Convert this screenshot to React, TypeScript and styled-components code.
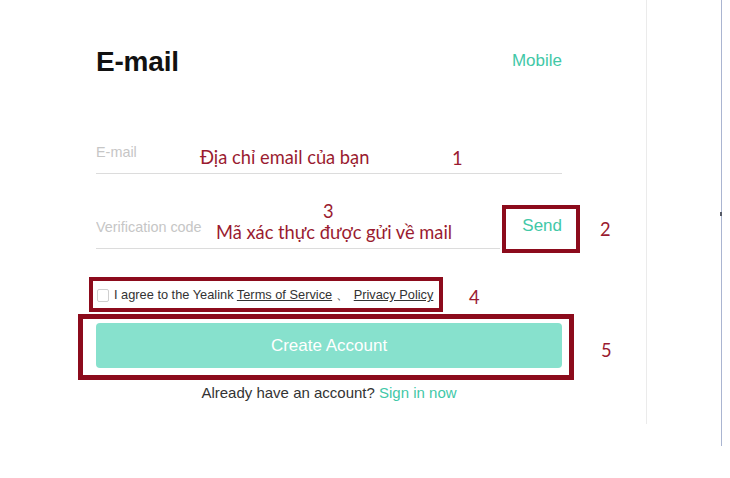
import { createGlobalStyle, styled } from "styled-components";

const GlobalStyle = createGlobalStyle`
    html, body {
        margin: 0;
        padding: 0;
        background: #ffffff;
    }
    body {
        font-family: "Liberation Sans", Arial, sans-serif;
        color: #333333;
    }
`

const TEAL = '#42c8a7';
const MAROON = '#8c0b1c';
const NOTE = '#9a1b30';

export default function App() {
    return (
        <>
            <GlobalStyle />
            <Window>
                <Panel>
                    <Form onSubmit={(e) => e.preventDefault()} autoComplete="off">
                        <Header>
                            <Title>E-mail</Title>
                            <SwitchLink href="#">Mobile</SwitchLink>
                        </Header>

                        <EmailField>
                            <LineInput type="email" placeholder="E-mail" />
                            <Note $top={16} $left={104}>Địa chỉ email của bạn</Note>
                            <Note $top={17} $left={356}>1</Note>
                        </EmailField>

                        <CodeRow>
                            <LineInput type="text" placeholder="Verification code" />
                            <SendButton type="button">
                                Send
                                <Mark $top={-1} $right={-18} $bottom={-4} $left={2} $width={4} />
                            </SendButton>
                            <Note $top={-5} $left={227}>3</Note>
                            <Note $top={16} $left={120}>Mã xác thực được gửi về mail</Note>
                            <Note $top={13} $left={504}>2</Note>
                        </CodeRow>

                        <AgreeRow>
                            <Agree>
                                <CheckBox type="checkbox" />
                                <span>
                                    I agree to the Yealink <TermLink href="#">Terms of Service</TermLink>{' 、'}<TermLink href="#">Privacy Policy</TermLink>
                                </span>
                                <Mark $top={-10} $right={-10} $bottom={-9} $left={-7} $width={4} />
                            </Agree>
                            <Note $top={0} $left={373}>4</Note>
                        </AgreeRow>

                        <SubmitWrap>
                            <CreateButton type="submit">Create Account</CreateButton>
                            <Mark $top={-9} $right={-12} $bottom={-12} $left={-18} $width={5} />
                            <Note $top={17} $left={505}>5</Note>
                        </SubmitWrap>

                        <SignIn>
                            Already have an account? <SignInLink href="#">Sign in now</SignInLink>
                        </SignIn>
                    </Form>
                </Panel>
            </Window>
        </>
    );
}

const Window = styled.div`
    position: relative;
    width: 721px;
    height: 446px;
    border-right: 1px solid #aab5d1;

    &::after {
        content: "";
        position: absolute;
        right: -1px;
        top: 212px;
        width: 2px;
        height: 4px;
        background: #555a66;
    }
`

const Panel = styled.div`
    width: 647px;
    height: 424px;
    border-right: 1px solid #ebebeb;
    padding: 46px 0 0 96px;
    box-sizing: border-box;
`

const Form = styled.form`
    width: 466px;
    display: flex;
    flex-direction: column;
`

const Header = styled.div`
    display: flex;
    justify-content: space-between;
    align-items: flex-start;
    height: 32px;
`

const Title = styled.h1`
    margin: 0;
    font-size: 28px;
    line-height: 32px;
    font-weight: 700;
    color: #111111;
    letter-spacing: -0.2px;
`

const SwitchLink = styled.a`
    margin-top: 5px;
    font-size: 17px;
    line-height: 20px;
    color: ${TEAL};
    text-decoration: none;
`

const EmailField = styled.div`
    position: relative;
    margin-top: 53px;
    display: flex;
`

const CodeRow = styled.div`
    position: relative;
    margin-top: 32px;
    display: flex;
    align-items: stretch;
`

const LineInput = styled.input`
    flex: 1;
    min-width: 0;
    height: 43px;
    box-sizing: border-box;
    padding: 0 0 1px;
    border: none;
    border-bottom: 1px solid #dcdcdc;
    outline: none;
    background: transparent;
    font-family: "Liberation Sans", Arial, sans-serif;
    font-size: 14.4px;
    color: #333333;

    &::placeholder {
        color: #c6c6c6;
    }
`

const SendButton = styled.button`
    position: relative;
    width: 62px;
    padding: 0 0 3px;
    border: none;
    background: transparent;
    text-align: right;
    font-family: "Liberation Sans", Arial, sans-serif;
    font-size: 17px;
    color: ${TEAL};
    cursor: pointer;
`

const AgreeRow = styled.div`
    position: relative;
    margin-top: 38px;
    display: flex;
`

const Agree = styled.label`
    position: relative;
    display: flex;
    align-items: center;
    gap: 5px;
    height: 16px;
    font-size: 12.8px;
    line-height: 16px;
    color: #333333;
    white-space: nowrap;
`

const CheckBox = styled.input`
    appearance: none;
    margin: 0 0 0 1px;
    width: 12px;
    height: 13px;
    box-sizing: border-box;
    border: 1px solid #cfcfcf;
    border-radius: 2px;
    background: #ffffff;
`

const TermLink = styled.a`
    color: #333333;
    text-decoration: underline;

    & + & {
        margin-left: 5px;
    }
`

const SubmitWrap = styled.div`
    position: relative;
    margin-top: 20px;
`

const CreateButton = styled.button`
    display: block;
    width: 100%;
    height: 45px;
    border: none;
    border-radius: 4px;
    background: #87e1cd;
    color: #ffffff;
    font-family: "Liberation Sans", Arial, sans-serif;
    font-size: 17px;
    cursor: pointer;
`

const SignIn = styled.p`
    margin: 16px 0 0;
    text-align: center;
    font-size: 15px;
    color: #333333;
`

const SignInLink = styled.a`
    color: ${TEAL};
    text-decoration: none;
`

const Mark = styled.span<{ $top: number; $right: number; $bottom: number; $left: number; $width: number }>`
    position: absolute;
    top: ${(p) => p.$top}px;
    right: ${(p) => p.$right}px;
    bottom: ${(p) => p.$bottom}px;
    left: ${(p) => p.$left}px;
    border: ${(p) => p.$width}px solid ${MAROON};
    pointer-events: none;
`

const Note = styled.span<{ $top: number; $left: number }>`
    position: absolute;
    top: ${(p) => p.$top}px;
    left: ${(p) => p.$left}px;
    font-family: Lato, "Open Sans", sans-serif;
    font-size: 18.3px;
    line-height: 20px;
    color: ${NOTE};
    white-space: nowrap;
    pointer-events: none;
`
